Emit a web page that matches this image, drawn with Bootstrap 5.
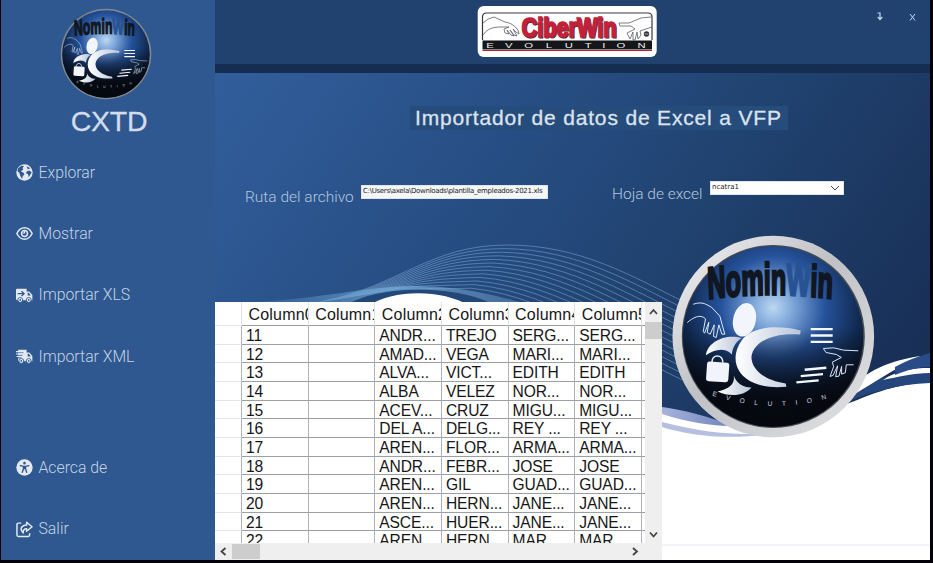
<!DOCTYPE html>
<html lang="es">
<head>
<meta charset="utf-8">
<title>Importador de datos</title>
<link href="https://cdn.jsdelivr.net/npm/bootstrap@5.3.0/dist/css/bootstrap.min.css" rel="stylesheet">
<style>
body{background:#050108;width:933px;height:563px;overflow:hidden}
.shell{width:930px;height:560px;padding-left:1px}
.side{width:214px;background:#2e588f;color:#c5d3e6;font-family:Roboto,sans-serif;font-weight:300}
.brand-pic{width:92px;height:92px;margin:8px auto 0 59px}
.brand-name{font:28.5px/36px "Liberation Sans",sans-serif;color:#d3dcea;padding-left:2px;margin-top:3px;height:36px;letter-spacing:-.3px;-webkit-text-stroke:.3px #d3dcea}
.side-link{height:61.3px;padding-left:15px;font-size:15.8px;gap:5.5px}
.side-link svg{width:17px;height:17px;color:#e3e8f1;flex:none}
.side-list{padding-top:3px}
.side-gap{height:50px}
.topbar{height:64px;background:#21426f}
.strip{height:9px;background:#152d50}
.plate{margin:5px 0 0 262px}
.winbtn{color:#c5d6e8;gap:25px;margin-right:14px;padding-top:7px}
.scene{background:linear-gradient(125deg,#315e9b 0,#274e84 32%,#20426f 55%,#182f56 85%,#182f56)}
.art{position:absolute;inset:0}
.headline{margin:33px 0 0 195px;width:378px;height:24px;background:#264c7c;color:#dce3ee;font:21px/24px "Liberation Sans",sans-serif;letter-spacing:.83px;padding-left:5px;white-space:nowrap;-webkit-text-stroke:.3px #dce3ee}
.fields{margin-top:48px;padding-left:30px;height:40px;font-family:Roboto,sans-serif;font-weight:300;font-size:15.5px;color:#b3c6df}
.fields label{white-space:nowrap}
.fld{height:14px;background:#f4f6f8;color:#222;font:7px/11px "DejaVu Sans",sans-serif;border:1px solid #dfe5ea;white-space:nowrap;padding-left:1px}
.ruta{width:116px;padding-top:8px}
.path{width:187px;margin-top:7px;letter-spacing:-.31px}
.hoja{width:98px;margin-left:64px;padding-top:5px}
.pick{width:134px;margin-top:3px;background:#fff}
.gridbox{width:447px;height:258px;margin-top:84px;background:#efefef}
.sheet{width:430px;height:241px;background:#fff;overflow:hidden;color:#161616;font-family:"Liberation Sans",sans-serif}
.line{display:grid;grid-template-columns:27px repeat(6,66.65px) 3.1px;height:18.68px}
.line>span{border-right:1px solid #aeb3bb;border-bottom:1px solid #9a9fa8;overflow:hidden;white-space:nowrap;padding-left:4px;font-size:15.6px;letter-spacing:-.12px;line-height:20.5px}
.line>span:first-child{border-bottom-color:#e2e5e9}
.line>span:last-child{border-right:0;padding:0}
.line.hd{height:24px}
.line.hd>span{font-size:16px;line-height:25px;letter-spacing:.2px;padding-left:6.5px;border-right-color:#e0e3e8}
.vbar{width:17px;height:241px}
.thumb-v{height:17px;background:#cdcdcd}
.hbar{height:17px}
.thumb-h{width:28px;height:15px;background:#cdcdcd}
</style>
<script src="https://cdn.jsdelivr.net/npm/bootstrap@5.3.0/dist/js/bootstrap.bundle.min.js"></script>
</head>
<body>
<svg width="0" height="0" class="position-absolute">
<defs>
<radialGradient id="orb" cx=".5" cy=".34" r=".68"><stop offset="0" stop-color="#bcd8f3"/><stop offset=".17" stop-color="#7ba4d8"/><stop offset=".42" stop-color="#26539c"/><stop offset=".72" stop-color="#10284e"/><stop offset="1" stop-color="#03060c"/></radialGradient>
<linearGradient id="shade" x2="0" y2="1"><stop offset=".45" stop-color="#05080e" stop-opacity="0"/><stop offset=".85" stop-color="#05080e" stop-opacity=".95"/></linearGradient>
<linearGradient id="silver"><stop offset="0" stop-color="#fff"/><stop offset="1" stop-color="#b9c6da"/></linearGradient>
<linearGradient id="rim" x2="1" y2="1"><stop offset="0" stop-color="#f4f4f6"/><stop offset=".45" stop-color="#bfc1c5"/><stop offset="1" stop-color="#e4e4e6"/></linearGradient>
<path id="arch" d="M340 222 Q658 196 972 222"/>
<path id="bowl" d="M216 512 Q400 572 574 518"/>
<symbol id="emblem" viewBox="128 63 544 544">
<circle cx="400" cy="335" r="271" fill="url(#orb)"/><circle cx="400" cy="335" r="271" fill="url(#shade)"/>
<g transform="scale(.6 1)"><text font-family="Liberation Sans" font-weight="700" font-size="134" fill="#111722" stroke="#111722" stroke-width="8"><textPath href="#arch" textLength="624" lengthAdjust="spacingAndGlyphs">Nomin<tspan fill="#285392" stroke="#285392">W</tspan>in</textPath></text></g>
<ellipse cx="314" cy="285" rx="34" ry="51" transform="rotate(13 314 285)" fill="#f3f5fc"/>
<g fill="url(#silver)"><path d="M483 317C415 300 340 303 306 346C270 395 287 452 343 475C377 489 412 488 440 486L438 476C371 467 334 431 335 396C341 350 400 322 481 329Z"/>
<path d="M198 391C203 350 260 325 305 340C288 350 278 368 276 389C255 367 225 373 198 391Z"/>
<path d="M282 452C290 477 310 487 335 488C315 513 270 518 233 500C266 493 286 480 282 452Z"/></g>
<path d="M216 413C216 387 249 387 249 413" fill="none" stroke="#e8edf7" stroke-width="5"/><rect x="200" y="412" width="67" height="59" rx="8" fill="#f2f4fb" transform="rotate(4 233 440)"/>
<path d="M513 313H579M513 332H579M513 351H579M495 435L560 429M483 454L550 448M470 473L537 467" stroke="#f3f6fb" stroke-width="7"/>
<g fill="none" stroke="#dbe7f7" stroke-width="3" stroke-linejoin="round"><path d="M160 238C190 228 200 240 215 247L240 274L247 300L255 328L246 328L237 300L229 338L221 335L223 300L211 328L202 323L207 292L194 325L190 320L197 282C180 265 158 280 142 293"/>
<path d="M656 378L612 376L582 369L551 371L559 383L590 389L605 398L578 412L582 426L571 455L580 452L594 423L588 456L598 454L606 425L606 448L617 444L620 420H642"/></g>
<text font-family="Liberation Sans" font-size="20" fill="#cdd6e3"><textPath href="#bowl" textLength="350" lengthAdjust="spacing">EVOLUTION</textPath></text>
</symbol>
</defs>
</svg>
<div class="shell d-flex">
<aside class="side flex-shrink-0">
<svg class="brand-pic d-block" viewBox="0 0 92 92"><circle cx="46" cy="46" r="45.3" fill="#838993"/><use href="#emblem" x="2" y="2" width="88" height="88"/></svg>
<div class="brand-name text-center">CXTD</div>
<nav class="side-list">
<div class="side-link d-flex align-items-center"><svg viewBox="0 0 16 16"><circle cx="8" cy="8" r="7.7" fill="currentColor"/><path d="M2 4L5.4 1.4L7.5 2.2L6 4L7 5L4.6 7L6.8 8L8 9.6L6.3 11.5L5.7 14L4 11L3.2 8.4L1.4 6.5ZM10 2L13.5 4L11 5ZM10 7L12.5 6L14.8 8L13.4 10L12 12.5L11.3 9.5L9.5 9Z" fill="#2e588f"/></svg>Explorar</div>
<div class="side-link d-flex align-items-center"><svg viewBox="0 0 16 16" fill="none" stroke="currentColor" stroke-width="1.4"><path d="M.8 8C4.2 .9 11.8 .9 15.2 8C11.8 15.1 4.2 15.1 .8 8Z"/><circle cx="8" cy="8" r="2.8"/><path d="M6 7.6H8V5.4" stroke-width="1"/></svg>Mostrar</div>
<div class="side-link d-flex align-items-center"><svg viewBox="0 0 16 16" fill="currentColor"><path d="M1 1.6H10V4.2H12.5L15.4 7.5V12.4H1Q0 12.4 0 11.4V2.6Q0 1.6 1 1.6ZM11 5.5V8H14L12 5.5Z" fill-rule="evenodd"/><g stroke="#2e588f" stroke-width=".8"><circle cx="4" cy="12.2" r="2.3"/><circle cx="12" cy="12.2" r="2.3"/></g><g fill="#2e588f"><circle cx="4" cy="12.2" r=".8"/><circle cx="12" cy="12.2" r=".8"/></g><path d="M1.6 6.3H7M5.2 4L7.6 6.3L5.2 8.6" stroke="#2e588f" stroke-width="1.2" fill="none"/></svg>Importar XLS</div>
<div class="side-link d-flex align-items-center"><svg viewBox="0 0 16 16" fill="currentColor"><path d="M2 1.6H10V4.2H12.5L15.4 7.5V12.4H2ZM11 5.5V8H14L12 5.5Z" fill-rule="evenodd"/><g stroke="#2e588f" stroke-width=".8"><circle cx="5" cy="12.2" r="2.3"/><circle cx="12" cy="12.2" r="2.3"/></g><g fill="#2e588f"><circle cx="5" cy="12.2" r=".8"/><circle cx="12" cy="12.2" r=".8"/></g><path d="M0 4.4H7M1 6.8H6M0 9.2H5" stroke="#2e588f" stroke-width=".8"/><path d="M0 3.4H7M0 5.7H6M.5 8H5" stroke="currentColor"/></svg>Importar XML</div>
<div class="side-gap"></div>
<div class="side-link d-flex align-items-center"><svg viewBox="0 0 16 16"><circle cx="8" cy="8" r="7.7" fill="currentColor"/><g fill="none" stroke="#2e588f" stroke-linecap="round" stroke-linejoin="round"><circle cx="8" cy="3.9" r=".7" fill="#2e588f"/><path d="M4 6.2L7 7H9L12 6.2M8 7.2V9M7 7V9.5L5.9 12.6M9 7V9.5L10.1 12.6" stroke-width="1.3"/></g></svg>Acerca de</div>
<div class="side-link d-flex align-items-center"><svg viewBox="0 0 16 16" fill="none" stroke="currentColor" stroke-width="1.4" stroke-linejoin="round"><path d="M5 2H2.2Q.9 2 .9 3.3V13.2Q.9 14.5 2.2 14.5H11.5Q12.8 14.5 12.8 13.2V11.5"/><path d="M10 1.2L15.1 5.4L10 9.7V7.3Q6.6 7.2 6.8 11.2Q3.6 8.2 5.5 5.6Q7 3.7 10 3.7Z"/></svg>Salir</div>
</nav>
</aside>
<main class="flex-grow-1 d-flex flex-column">
<header class="topbar d-flex align-items-start flex-shrink-0">
<svg class="plate" width="180" height="52" viewBox="0 0 180 52"><rect x=".7" y="1" width="179" height="51" rx="6" fill="#fff"/>
<path d="M5.5 35V12Q5.5 8 9.5 8H171Q175 8 175 12V35" fill="none" stroke="#34383d" stroke-width="1.2"/>
<rect x="5.5" y="35.5" width="169.5" height="9" fill="#151619"/><path d="M5.5 45.5H175" stroke="#b32134"/>
<g font-family="Liberation Sans" font-weight="700" font-size="27"><text x="45.5" y="33.4" textLength="95" lengthAdjust="spacingAndGlyphs" fill="#45242a" stroke="#45242a" stroke-width="1.2" aria-hidden="true">CiberWin</text><text x="44.5" y="32.4" textLength="95" lengthAdjust="spacingAndGlyphs" fill="#c4203a" stroke="#c4203a" stroke-width="1.7">CiberWin</text></g>
<g fill="none" stroke="#5a5d62" stroke-width=".8"><path d="M6 18Q11 13 17 12L28 17Q36 18 41 25L42 29L39 27L36 24L40 31L37 30L33 25L37 31L34 30L30 25L32 29L28 28L27 24L32 22L22 22Q11 22 6 30"/><path d="M174 12L164 13L152 18L142 18L143 21L154 21L158 24L150 28L153 34L156 27L156 35H158L160 27L161 34L164 30L163 26L175 22"/></g>
<circle cx="169.5" cy="29" r="2.7" fill="#303238"/><path d="M167.5 29H171.5" stroke="#fff" stroke-width=".6"/>
<text transform="scale(1.55 1)" font-family="Liberation Sans" font-size="7.3" fill="#eee" y="42.6" x="6 18 30.5 44.3 56.6 69.5 80.8 90 103.6">EVOLUTION</text></svg>
<div class="winbtn d-flex ms-auto align-items-center"><svg width="8" height="20" viewBox="0 0 8 20" fill="none" stroke="currentColor" stroke-width="1.2"><path d="M1.5 6H4V12M1.8 10L4 12.5L6.3 10"/></svg><svg width="7" height="20" viewBox="0 0 7 20" stroke="currentColor" fill="none"><path d="M1 7L6 13.5M6 7L1 13.5"/></svg></div>
</header>
<div class="strip flex-shrink-0"></div>
<section class="scene position-relative flex-grow-1">
<svg class="art" width="715" height="487" viewBox="215 73 715 487">
<defs><linearGradient id="wave"><stop offset="0" stop-color="#a5b3dc"/><stop offset=".55" stop-color="#7486bd"/><stop offset="1" stop-color="#c9d4ee"/></linearGradient><linearGradient id="glow"><stop offset="0" stop-color="#5b92c4" stop-opacity="0"/><stop offset=".5" stop-color="#76aedb" stop-opacity=".7"/><stop offset="1" stop-color="#88acd2" stop-opacity=".2"/></linearGradient></defs>
<g id="threads" fill="none" stroke="#7fabd3" stroke-width=".8" opacity=".68"></g>
<path d="M215 303C310 303 360 286 415 286C460 286 520 297 570 322L440 320L320 304Z" fill="url(#glow)"/>
<path d="M345 306C375 285 460 284 495 306Z" fill="#214877"/>
<path d="M368 306C392 290 440 288 470 306Z" fill="#fff"/>
<path d="M662 407C700 412 720 423 760 432L780 438C730 440 690 428 662 423Z" fill="url(#wave)"/>
<path d="M662 414C700 426 730 429 780 424C850 411 868 386 930 382V560H650V420Z" fill="#fff"/>
<path d="M662 422C700 432 730 435 770 434C730 440 690 436 662 427Z" fill="#b5bfdf"/>
<path d="M842 404C865 384 891 370 930 368V383C898 384 870 392 842 404Z" fill="#25457d"/>
<path d="M845 394C865 370 892 360 921 356C892 370 872 384 845 400ZM883 380C898 370 912 368 930 368V373C912 373 898 377 883 380Z" fill="#fff"/>
<path d="M895 367C908 360 919 356 930 353V367C918 367 907 370 895 375Z" fill="#294b87"/>
<path d="M662 545H930" stroke="#e3e6ec"/>
<circle cx="773.3" cy="336.5" r="100.8" fill="url(#rim)"/><circle cx="773.3" cy="336.5" r="91.5" fill="#45484f"/>
<use href="#emblem" x="682.6" y="246" width="181" height="181"/>
</svg>
<div class="position-relative">
<h1 class="headline mb-0">Importador de datos de Excel a VFP</h1>
<div class="fields d-flex align-items-start">
<label class="ruta">Ruta del archivo</label><div class="fld path">C:\Users\axela\Downloads\plantilla_empleados-2021.xls</div>
<label class="hoja">Hoja de excel</label><div class="fld pick d-flex justify-content-between"><span>ncatra1</span><svg width="14" height="12" viewBox="0 0 14 12"><path d="M2 4L6 8L10 4" fill="none" stroke="#444"/></svg></div>
</div>
<div class="gridbox">
<div class="d-flex"><div class="sheet" id="sheet"></div>
<div class="vbar d-flex flex-column"><svg width="17" height="20" viewBox="0 0 17 20"><path d="M5 12L8.5 8L12 12" fill="none" stroke="#444" stroke-width="1.8"/></svg><div class="thumb-v"></div><svg class="mt-auto" width="17" height="17" viewBox="0 0 17 17"><path d="M5 6.5L8.5 10.5L12 6.5" fill="none" stroke="#444" stroke-width="1.8"/></svg></div></div>
<div class="hbar d-flex align-items-center"><svg width="17" height="17" viewBox="0 0 17 17"><path d="M10.5 5L6.5 8.5L10.5 12" fill="none" stroke="#444" stroke-width="1.8"/></svg><div class="thumb-h"></div><svg class="ms-auto me-3" width="20" height="17" viewBox="0 0 20 17"><path d="M7 5L11 8.5L7 12" fill="none" stroke="#444" stroke-width="1.8"/></svg></div>
</div>
</div>
</section>
</main>
</div>
<script>
const rows=[['11','','ANDR...','TREJO','SERG...'],['12','','AMAD...','VEGA','MARI...'],['13','','ALVA...','VICT...','EDITH'],['14','','ALBA','VELEZ','NOR...'],['15','','ACEV...','CRUZ','MIGU...'],['16','','DEL A...','DELG...','REY ...'],['17','','AREN...','FLOR...','ARMA...'],['18','','ANDR...','FEBR...','JOSE'],['19','','AREN...','GIL','GUAD...'],['20','','AREN...','HERN...','JANE...'],['21','','ASCE...','HUER...','JANE...'],['22','','AREN...','HERN...','MAR...']];
const line=(cells,c='')=>`<div class="line ${c}"><span></span>${cells.map(t=>`<span>${t}</span>`).join('')}<span></span></div>`;
document.getElementById('sheet').innerHTML=line([0,1,2,3,4,5].map(i=>'Column'+i),'hd')+rows.map(r=>line([...r,r[4]])).join('');
// fan of thin curves over the hill
let t='';
for(let i=0;i<13;i++)t+=`<path d="M${320+i*4} ${302-i*.7}C${400+i*2} ${286-i*.2} ${430-i*2} ${245+i*3.8} ${507-i*3} ${245+i*3.6}C${580-i*2} ${245+i*4.3} 630 ${275+i*7} 692 ${306+i*6.5}"/>`;
document.getElementById('threads').innerHTML=t;
</script>
</body>
</html>
